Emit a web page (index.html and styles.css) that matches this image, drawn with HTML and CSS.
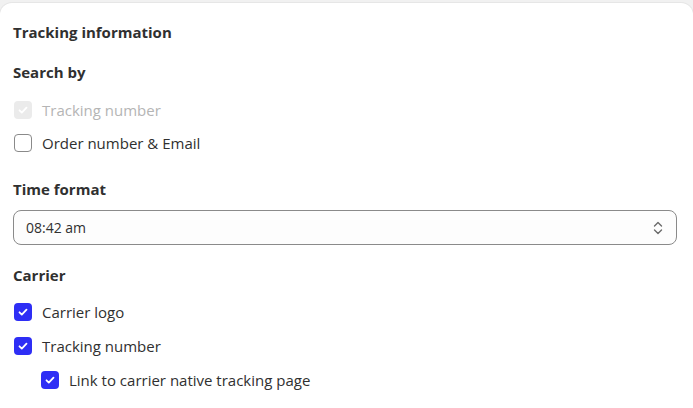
FILE: index.html
```html
<!DOCTYPE html>
<html>
<head>
<meta charset="utf-8">
<link rel="stylesheet" href="styles.css">
</head>
<body>
<div class="card">
  <h2 class="title">Tracking information</h2>

  <h3 class="heading heading-search">Search by</h3>
  <div class="list">
    <label class="row disabled">
      <span class="box checked-disabled">
        <svg viewBox="0 0 18 18" width="18" height="18"><path d="M5.5 9.3l2.3 2.3 4.7-5" fill="none" stroke="#fff" stroke-width="1.8" stroke-linecap="round" stroke-linejoin="round"/></svg>
      </span>
      <span class="label">Tracking number</span>
    </label>
    <label class="row">
      <span class="box unchecked"></span>
      <span class="label">Order number &amp; Email</span>
    </label>
  </div>

  <h3 class="heading heading-time">Time format</h3>
  <div class="select">
    <span class="select-value">08:42 am</span>
    <svg class="select-icon" viewBox="0 0 12 16" width="12" height="16"><path d="M2.5 6l3.5-3.5 3.5 3.5M2.5 10l3.5 3.5 3.5-3.5" fill="none" stroke="#6b6b6b" stroke-width="1.4" stroke-linecap="round" stroke-linejoin="round"/></svg>
  </div>

  <h3 class="heading heading-carrier">Carrier</h3>
  <div class="list list-carrier">
    <label class="row">
      <span class="box checked">
        <svg viewBox="0 0 18 18" width="18" height="18"><path d="M5.5 9.3l2.3 2.3 4.7-5" fill="none" stroke="#fff" stroke-width="1.8" stroke-linecap="round" stroke-linejoin="round"/></svg>
      </span>
      <span class="label">Carrier logo</span>
    </label>
    <label class="row">
      <span class="box checked">
        <svg viewBox="0 0 18 18" width="18" height="18"><path d="M5.5 9.3l2.3 2.3 4.7-5" fill="none" stroke="#fff" stroke-width="1.8" stroke-linecap="round" stroke-linejoin="round"/></svg>
      </span>
      <span class="label">Tracking number</span>
    </label>
    <label class="row sub">
      <span class="box checked">
        <svg viewBox="0 0 18 18" width="18" height="18"><path d="M5.5 9.3l2.3 2.3 4.7-5" fill="none" stroke="#fff" stroke-width="1.8" stroke-linecap="round" stroke-linejoin="round"/></svg>
      </span>
      <span class="label">Link to carrier native tracking page</span>
    </label>
  </div>
</div>
</body>
</html>
```

FILE: styles.css
```css
* { box-sizing: border-box; }
html, body { margin: 0; padding: 0; }
body {
  background: #f1f1f1;
  font-family: "Open Sans", "Noto Sans", sans-serif;
  color: #303030;
  font-size: 15px;
  line-height: 20px;
  height: 408px;
  overflow: hidden;
}
.card {
  margin-top: 3px;
  background: #fff;
  border-radius: 12px 12px 0 0;
  box-shadow: 0 0 0 1px #e6e6e6;
  padding: 19px 16px 0 13px;
  height: 405px;
}
.title, .heading {
  margin: 0;
  font-size: 15px;
  line-height: 20px;
  font-weight: 700;
  color: #303030;
}
.heading-search { margin-top: 20px; }
.heading-time { margin-top: 26px; }
.heading-carrier { margin-top: 20px; }
.list {
  display: flex;
  flex-direction: column;
  gap: 13px;
  margin-top: 18px;
}
.list-carrier { margin-top: 17px; gap: 14px; }
.row {
  display: flex;
  align-items: center;
  gap: 10px;
  height: 20px;
  padding-left: 1px;
}
.row.sub { padding-left: 28px; }
.box {
  width: 18px;
  height: 18px;
  border-radius: 4px;
  flex: none;
  display: block;
}
.box svg { display: block; }
.unchecked { border: 1px solid #8a8a8a; background: #fff; }
.checked { background: #2e2ef5; }
.checked-disabled { background: #ebebeb; }
.disabled .label { color: #b5b5b5; }
.label { color: #303030; }
.select {
  margin-top: 11px;
  height: 35px;
  border: 1px solid #8a8a8a;
  border-radius: 8px;
  background: #fdfdfd;
  display: flex;
  align-items: center;
  justify-content: space-between;
  padding: 0 12px 0 12px;
}
.select-value { color: #303030; font-size: 14px; }
.select-icon { display: block; }
```
